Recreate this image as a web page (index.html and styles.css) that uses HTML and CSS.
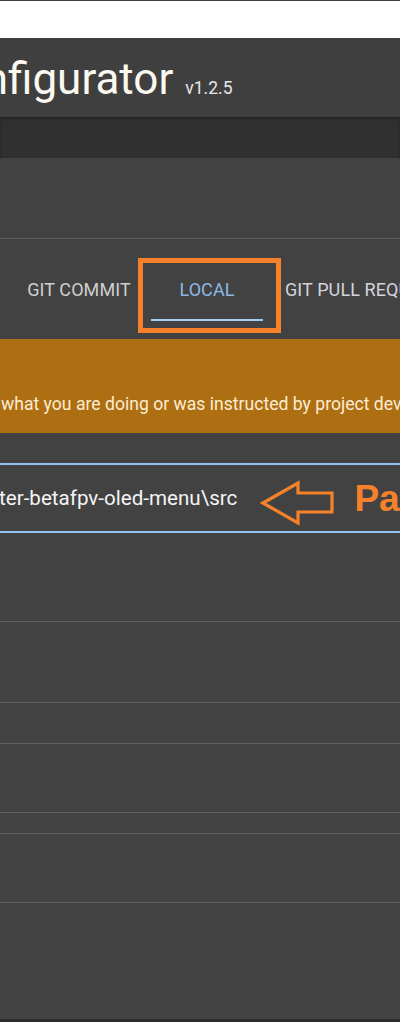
FILE: index.html
```html
<!DOCTYPE html>
<html lang="en">
<head>
<meta charset="utf-8">
<title>ExpressLRS Configurator</title>
<link rel="stylesheet" href="styles.css">
</head>
<body>
<div class="topline"></div>
<div class="whitebar"></div>
<header class="header">
  <h1 class="title">Configurator <span class="version">v1.2.5</span></h1>
</header>
<div class="toolbar"></div>
<main class="main">
  <div class="section-top"></div>
  <div class="tabs-row">
    <nav class="tabs">
      <div class="tab tab-commit">GIT COMMIT</div>
      <div class="tab tab-active">LOCAL</div>
      <div class="tab tab-pr">GIT PULL REQUEST</div>
    </nav>
    <div class="annot-box"></div>
  </div>
  <div class="banner">
    <p class="banner-text">what you are doing or was instructed by project developers</p>
  </div>
  <div class="input-row">
    <span class="input-text">ter-betafpv-oled-menu\src</span>
    <svg class="annot-arrow" width="76" height="48" viewBox="0 0 76 48">
      <path d="M3 24 L38 4 L38 14 L72 14 L72 33 L38 33 L38 44 Z" fill="none" stroke="#f5822a" stroke-width="3.2" stroke-linejoin="miter"/>
    </svg>
    <span class="annot-label">Path</span>
  </div>
  <div class="rows">
    <div class="row r1"></div>
    <div class="row r2"></div>
    <div class="row r3"></div>
    <div class="row r4"></div>
    <div class="row r5"></div>
    <div class="row r6"></div>
    <div class="row r7"></div>
  </div>
  <div class="bottom-edge"></div>
</main>
</body>
</html>
```
FILE: styles.css
```css
* { box-sizing: border-box; }
html, body {
  margin: 0;
  padding: 0;
  width: 400px;
  height: 1022px;
  overflow: hidden;
  background: #424242;
  font-family: Roboto, "Liberation Sans", sans-serif;
}
.topline { height: 1px; background: #3b4248; }
.whitebar { height: 37px; background: #ffffff; }
.header {
  height: 79px;
  background: #3f3f3f;
  overflow: hidden;
  display: flex;
  align-items: center;
}
.title {
  margin: 0 0 0 -70px;
  white-space: nowrap;
  font-weight: 400;
  font-size: 44px;
  line-height: 1;
  color: #fbf8ef;
  padding-top: 2px;
}
.version {
  font-size: 17.5px;
  color: #e8e8e8;
  margin-left: 1px;
}
.toolbar {
  height: 41px;
  background: #303030;
  box-shadow: inset 0 2px 3px rgba(0,0,0,0.25);
}
.main { background: #424242; }
.section-top {
  height: 81px;
  border-bottom: 1px solid #5c5c5c;
}
.tabs-row {
  position: relative;
  height: 100px;
  padding-top: 32px;
  overflow: hidden;
}
.tabs {
  display: flex;
  white-space: nowrap;
  margin-left: 7px;
}
.tab {
  flex: none;
  font-size: 18px;
  line-height: 20px;
  padding: 9px 0 19px;
  color: #cfcfcf;
  letter-spacing: 0.1px;
}
.tab-commit { width: 144px; text-align: center; }
.tab-active {
  width: 112px;
  text-align: center;
  color: #8db8e2;
  border-bottom: 2px solid #a6cdf0;
}
.tab-pr { padding-left: 22px; color: #d4d4da; }
.annot-box {
  position: absolute;
  left: 138px;
  top: 19px;
  width: 143px;
  height: 75px;
  border: 5px solid #f5822a;
}
.banner {
  height: 94px;
  background: #ae6e12;
  display: flex;
  align-items: flex-end;
  overflow: hidden;
}
.banner-text {
  margin: 0 0 18px 1px;
  white-space: nowrap;
  font-size: 17.6px;
  line-height: 22px;
  color: #fbedd3;
}
.input-row {
  margin-top: 30px;
  height: 70px;
  border-top: 2px solid #93c3ec;
  border-bottom: 2px solid #93c3ec;
  display: flex;
  align-items: center;
  white-space: nowrap;
  overflow: hidden;
}
.input-text {
  font-size: 20.6px;
  color: #f4f4f4;
  margin-left: -1px;
  flex: none;
}
.annot-arrow {
  flex: none;
  margin-left: 23px;
  margin-top: 10px;
}
.annot-label {
  flex: none;
  margin-left: 18px;
  margin-top: 2px;
  font-family: "Liberation Sans", Arial, sans-serif;
  font-weight: 700;
  font-size: 37px;
  color: #f5822a;
}
.rows { display: flex; flex-direction: column; }
.row { border-bottom: 1px solid #5f5f5f; }
.r1 { height: 89px; }
.r2 { height: 81px; }
.r3 { height: 41px; }
.r4 { height: 69px; }
.r5 { height: 21px; }
.r6 { height: 69px; }
.r7 { height: 116px; border-bottom: none; }
.bottom-edge { height: 3px; background: #2a2b2c; }
```
